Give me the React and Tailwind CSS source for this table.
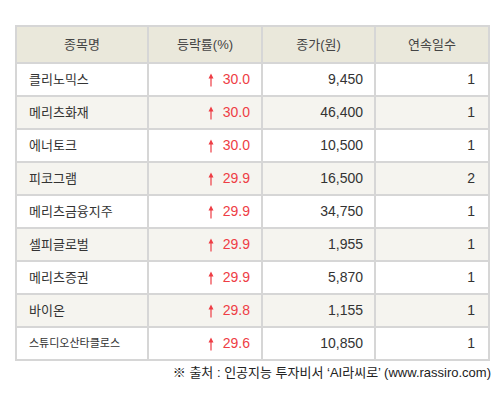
import React from 'react';

const rows = [
    { name: '클리노믹스', rate: '30.0', price: '9,450', days: '1' },
    { name: '메리츠화재', rate: '30.0', price: '46,400', days: '1' },
    { name: '에너토크', rate: '30.0', price: '10,500', days: '1' },
    { name: '피코그램', rate: '29.9', price: '16,500', days: '2' },
    { name: '메리츠금융지주', rate: '29.9', price: '34,750', days: '1' },
    { name: '셀피글로벌', rate: '29.9', price: '1,955', days: '1' },
    { name: '메리츠증권', rate: '29.9', price: '5,870', days: '1' },
    { name: '바이온', rate: '29.8', price: '1,155', days: '1' },
    { name: '스튜디오산타클로스', rate: '29.6', price: '10,850', days: '1', small: true },
];

const UpArrow = () => (
    <svg width="6" height="14" viewBox="0 0 6 14" className="mr-[9px]">
        <path d="M3 0.5 L5.5 5.5 L3.6 5.5 L3.6 13.5 L2.4 13.5 L2.4 5.5 L0.5 5.5 Z" fill="#ee3d45" />
    </svg>
);

const cell = 'border-r-2 border-b-2 border-[#d6d6d6] flex items-center';

const App = () => {
    return (
        <div className="w-[503px] h-[420px] bg-white pt-[25px] pl-[15px]" style={{ fontFamily: '"Liberation Sans", "Noto Sans CJK KR", sans-serif' }}>
            <div className="grid grid-cols-[132px_114px_113px_114px] w-[475px] border-t-2 border-l-2 border-[#d6d6d6] text-[#333]">
                {['종목명', '등락률(%)', '종가(원)', '연속일수'].map((h) => (
                    <div key={h} className={`${cell} h-[37px] justify-center bg-[#eae8db] text-[13px] text-[#444]`}>{h}</div>
                ))}
                {rows.map((r, i) => {
                    const bg = i % 2 === 1 ? 'bg-[#f5f4ef]' : 'bg-white';
                    return (
                        <React.Fragment key={r.name}>
                            <div className={`${cell} ${bg} h-[33px] pl-[12px] ${r.small ? 'text-[11px]' : 'text-[13px]'}`}>{r.name}</div>
                            <div className={`${cell} ${bg} h-[33px] justify-end pr-[11px] text-[14px] text-[#ee3d45]`}>
                                <UpArrow />
                                {r.rate}
                            </div>
                            <div className={`${cell} ${bg} h-[33px] justify-end pr-[11px] text-[14px]`}>{r.price}</div>
                            <div className={`${cell} ${bg} h-[33px] justify-end pr-[13px] text-[14px]`}>{r.days}</div>
                        </React.Fragment>
                    );
                })}
            </div>
            <div className="w-[476px] text-right text-[13px] text-[#222] mt-[3px] leading-[18px]">
                ※ 출처 : 인공지능 투자비서 ‘AI라씨로’ (www.rassiro.com)
            </div>
        </div>
    );
};

export default App;
